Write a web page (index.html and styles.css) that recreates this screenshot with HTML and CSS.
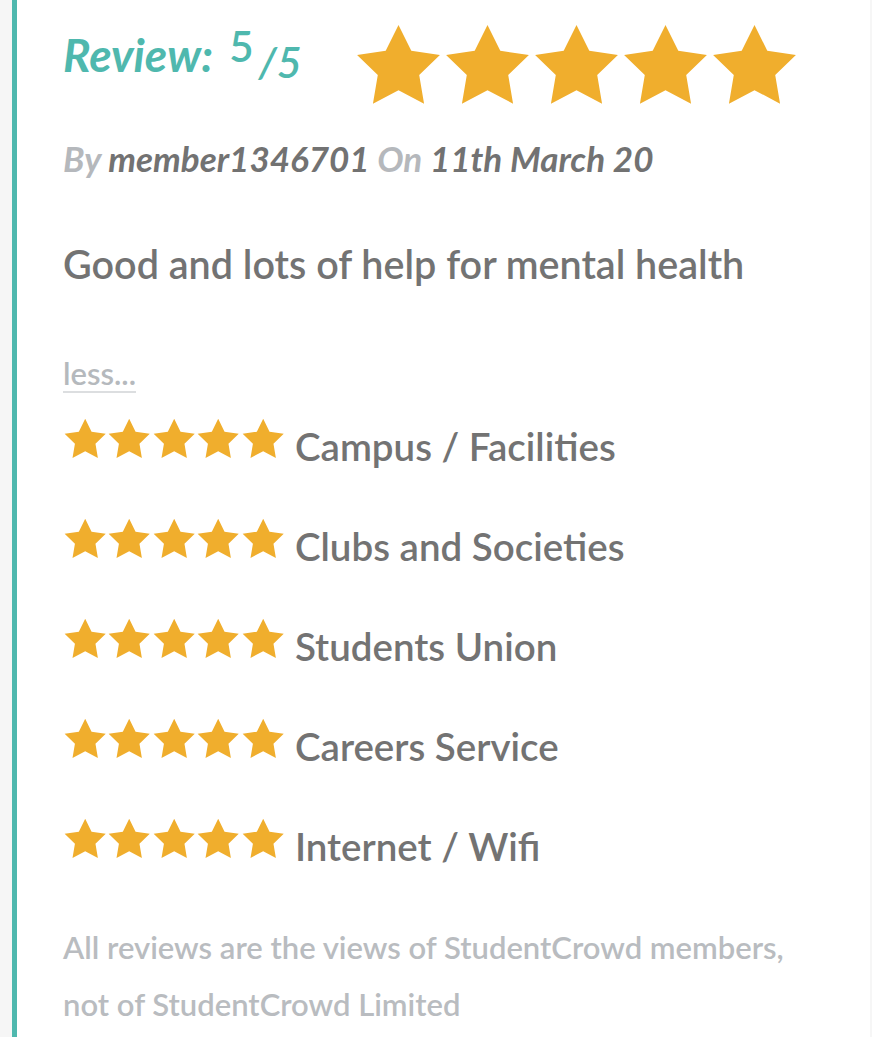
FILE: index.html
```html
<!DOCTYPE html>
<html lang="en">
<head>
    <meta charset="utf-8">
    <title>Review</title>
    <link rel="stylesheet" href="styles.css">
</head>
<body>
    <svg width="0" height="0" class="defs">
        <defs>
            <polygon id="star" points="50,2 64.7,31.8 97.6,36.6 73.8,59.7 79.4,92.5 50,77 20.6,92.5 26.2,59.7 2.4,36.6 35.3,31.8" />
        </defs>
    </svg>
    <div class="review-card">
        <div class="review-head">
            <h2 class="review-title">Review: <span class="score">5</span><span class="out-of">/5</span></h2>
            <div class="stars stars-big">
                <svg viewBox="0 0 100 95"><use href="#star" /></svg>
                <svg viewBox="0 0 100 95"><use href="#star" /></svg>
                <svg viewBox="0 0 100 95"><use href="#star" /></svg>
                <svg viewBox="0 0 100 95"><use href="#star" /></svg>
                <svg viewBox="0 0 100 95"><use href="#star" /></svg>
            </div>
        </div>
        <p class="review-meta"><span class="muted">By</span> member1346701 <span class="muted">On</span> 11th March 20</p>
        <p class="review-text">Good and lots of help for mental health</p>
        <a class="less-link" href="#">less...</a>

        <ul class="ratings">
            <li>
                <div class="stars stars-small">
                    <svg viewBox="0 0 100 95"><use href="#star" /></svg>
                    <svg viewBox="0 0 100 95"><use href="#star" /></svg>
                    <svg viewBox="0 0 100 95"><use href="#star" /></svg>
                    <svg viewBox="0 0 100 95"><use href="#star" /></svg>
                    <svg viewBox="0 0 100 95"><use href="#star" /></svg>
                </div>
                <span class="label">Campus / Facilities</span>
            </li>
            <li>
                <div class="stars stars-small">
                    <svg viewBox="0 0 100 95"><use href="#star" /></svg>
                    <svg viewBox="0 0 100 95"><use href="#star" /></svg>
                    <svg viewBox="0 0 100 95"><use href="#star" /></svg>
                    <svg viewBox="0 0 100 95"><use href="#star" /></svg>
                    <svg viewBox="0 0 100 95"><use href="#star" /></svg>
                </div>
                <span class="label">Clubs and Societies</span>
            </li>
            <li>
                <div class="stars stars-small">
                    <svg viewBox="0 0 100 95"><use href="#star" /></svg>
                    <svg viewBox="0 0 100 95"><use href="#star" /></svg>
                    <svg viewBox="0 0 100 95"><use href="#star" /></svg>
                    <svg viewBox="0 0 100 95"><use href="#star" /></svg>
                    <svg viewBox="0 0 100 95"><use href="#star" /></svg>
                </div>
                <span class="label">Students Union</span>
            </li>
            <li>
                <div class="stars stars-small">
                    <svg viewBox="0 0 100 95"><use href="#star" /></svg>
                    <svg viewBox="0 0 100 95"><use href="#star" /></svg>
                    <svg viewBox="0 0 100 95"><use href="#star" /></svg>
                    <svg viewBox="0 0 100 95"><use href="#star" /></svg>
                    <svg viewBox="0 0 100 95"><use href="#star" /></svg>
                </div>
                <span class="label">Careers Service</span>
            </li>
            <li>
                <div class="stars stars-small">
                    <svg viewBox="0 0 100 95"><use href="#star" /></svg>
                    <svg viewBox="0 0 100 95"><use href="#star" /></svg>
                    <svg viewBox="0 0 100 95"><use href="#star" /></svg>
                    <svg viewBox="0 0 100 95"><use href="#star" /></svg>
                    <svg viewBox="0 0 100 95"><use href="#star" /></svg>
                </div>
                <span class="label">Internet / Wifi</span>
            </li>
        </ul>

        <p class="disclaimer">All reviews are the views of StudentCrowd members, not of StudentCrowd Limited</p>
    </div>
</body>
</html>
```

FILE: styles.css
```css
body {
    font-family: 'Lato', 'Open Sans', sans-serif;
    background-color: #f6f6f6;
    margin: 0;
    padding: 0;
}
.defs {
    position: absolute;
}
.review-card {
    margin-left: 12px;
    width: 807px;
    background-color: #ffffff;
    border-left: 5px solid #4fb8ae;
    padding: 0 0 0 46px;
    min-height: 1037px;
}
.review-head {
    display: flex;
    align-items: flex-start;
}
.review-title {
    margin: 32px 0 0;
    width: 292px;
    font-size: 46px;
    font-style: italic;
    font-weight: 700;
    color: #4fb8ae;
    line-height: 45px;
}
.review-title .score {
    margin-left: 6px;
    font-size: 42px;
    line-height: 0;
    vertical-align: 10px;
    font-style: normal;
    font-weight: 600;
}
.review-title .out-of {
    margin-left: 5px;
    font-size: 43px;
    line-height: 0;
    vertical-align: -6px;
    font-weight: 600;
}
.stars {
    display: flex;
}
.stars svg {
    fill: #f0ae2d;
}
.stars-big {
    margin-top: 23px;
}
.stars-big svg {
    width: 87px;
    height: 83px;
    margin-right: 2px;
}
.review-meta {
    margin: 35px 0 0;
    font-size: 35px;
    line-height: 35px;
    font-style: italic;
    font-weight: 700;
    color: #727272;
}
.review-meta .muted {
    color: #b5b8bc;
}
.review-text {
    margin: 68px 0 0;
    font-size: 39.5px;
    line-height: 40px;
    font-weight: 600;
    color: #737373;
}
.less-link {
    display: block;
    width: fit-content;
    margin-top: 74px;
    padding-bottom: 2px;
    font-size: 31px;
    line-height: 31px;
    font-weight: 600;
    color: #b5b9bd;
    text-decoration: none;
    border-bottom: 2px solid #dcdee0;
}
.ratings {
    list-style: none;
    margin: 0;
    padding: 0;
}
.ratings li {
    display: flex;
    align-items: center;
    height: 100px;
    font-size: 38.5px;
    font-weight: 600;
    color: #737373;
}
.stars-small {
    margin: 0 10px 9px 0;
}
.stars-small svg {
    width: 44.4px;
    height: 41px;
}
.ratings .label {
    padding-top: 6px;
}
.disclaimer {
    margin: 26px 0 0;
    width: 760px;
    font-size: 31px;
    font-weight: 600;
    line-height: 57px;
    color: #b9bcc0;
}
```
